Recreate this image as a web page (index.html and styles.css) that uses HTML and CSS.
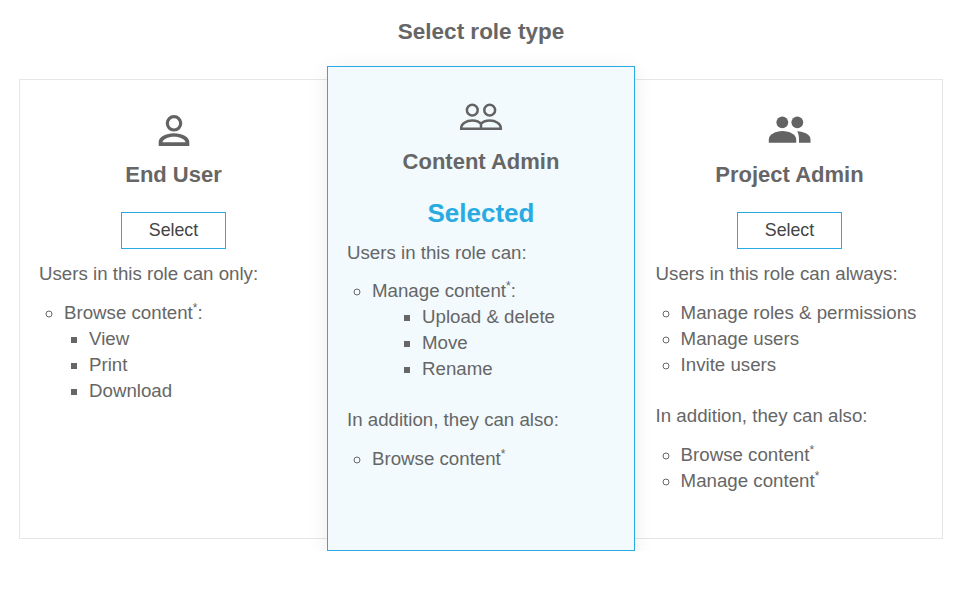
FILE: index.html
```html
<!DOCTYPE html>
<html lang="en">
<head>
<meta charset="utf-8">
<title>Select role type</title>
<link rel="stylesheet" href="styles.css">
</head>
<body>
<main class="page">
  <h1 class="title">Select role type</h1>
  <div class="roles">
    <section class="card card-left">
      <svg class="icon" width="48" height="32" viewBox="0 0 48 32" fill="#636363">
        <circle cx="24" cy="8.300" r="6.700" fill="none" stroke="#636363" stroke-width="3.200"/>
        <path fill-rule="evenodd" d="M8.700 31v-4c0-5 7-8.700 15.300-8.700s15.300 3.700 15.300 8.700v4zM12.400 27.300h23.200c-.6-3-5.400-5.500-11.600-5.500s-11 2.500-11.600 5.500z"/>
      </svg>
      <h2 class="name">End User</h2>
      <button class="select" type="button">Select</button>
      <p class="lead">Users in this role can only:</p>
      <ul class="perms">
        <li>Browse content<sup>*</sup>:
          <ul>
            <li>View</li>
            <li>Print</li>
            <li>Download</li>
          </ul>
        </li>
      </ul>
    </section>
    <section class="card card-active">
      <svg class="icon" width="48" height="32" viewBox="0 0 48 32" fill="none" stroke="#636363" stroke-width="2.500">
        <circle cx="15.300" cy="8.150" r="5.400"/>
        <circle cx="32.700" cy="8.150" r="5.400"/>
        <path d="M4.200 26.800v-1c0-4 5-7.200 11-7.200 3.500 0 7 1 8.800 3.500 1.800-2.500 5.300-3.500 8.800-3.500 6 0 11 3.200 11 7.200v1zM24 22v5"/>
      </svg>
      <h2 class="name">Content Admin</h2>
      <div class="selected">Selected</div>
      <p class="lead">Users in this role can:</p>
      <ul class="perms perms-tight">
        <li>Manage content<sup>*</sup>:
          <ul class="deep">
            <li>Upload &amp; delete</li>
            <li>Move</li>
            <li>Rename</li>
          </ul>
        </li>
      </ul>
      <p class="lead lead-more">In addition, they can also:</p>
      <ul class="perms">
        <li>Browse content<sup>*</sup></li>
      </ul>
    </section>
    <section class="card card-right">
      <svg class="icon" width="48" height="32" viewBox="0 0 48 32" fill="#636363">
        <circle cx="16.300" cy="7.300" r="5.900"/>
        <circle cx="31.300" cy="7.300" r="5.900"/>
        <path d="M2.800 27.700v-3.200c0-5 6.800-8.500 13.700-8.500s13.700 3.500 13.700 8.500v3.200z"/>
        <path d="M31.200 16.200c6.800.3 13.300 3.300 13.300 8v3.500H33v-3.500c0-3-.5-5.800-1.800-8z"/>
      </svg>
      <h2 class="name">Project Admin</h2>
      <button class="select" type="button">Select</button>
      <p class="lead">Users in this role can always:</p>
      <ul class="perms">
        <li>Manage roles &amp; permissions</li>
        <li>Manage users</li>
        <li>Invite users</li>
      </ul>
      <p class="lead lead-more">In addition, they can also:</p>
      <ul class="perms">
        <li>Browse content<sup>*</sup></li>
        <li>Manage content<sup>*</sup></li>
      </ul>
    </section>
  </div>
</main>
</body>
</html>
```
FILE: styles.css
```css
html, body {
  margin: 0;
  padding: 0;
  background: #fff;
}
body {
  font-family: "Liberation Sans", Arial, sans-serif;
  font-size: 18.7px;
  line-height: 26px;
  color: #666;
}
.page {
  width: 924px;
  margin-left: 19px;
}
.title {
  margin: 0;
  padding-top: 18px;
  height: 48px;
  font-size: 22.500px;
  line-height: 28px;
  font-weight: 700;
  text-align: center;
}
.roles {
  display: grid;
  grid-template-columns: repeat(3, 308px);
  height: 485px;
}
.card {
  display: flex;
  flex-direction: column;
  box-sizing: border-box;
  min-width: 0;
  margin: 13px 0 12px;
  padding: 35px 19px 0;
  border: 1px solid #e6e6e6;
}
.card-left {
  border-right: 0;
}
.card-right {
  border-left: 0;
  padding-left: 20.600px;
  padding-right: 18.600px;
}
.card-active {
  position: relative;
  margin: 0;
  background: #f2fafd;
  border: 1px solid #29abe2;
  box-shadow: 0 4px 20px rgba(0, 0, 0, 0.08);
}
.icon {
  display: block;
  align-self: center;
  flex: none;
}
.name {
  margin: 13px 0 0;
  font-size: 22px;
  line-height: 30px;
  font-weight: 700;
  text-align: center;
}
.select {
  align-self: center;
  width: 105px;
  height: 37px;
  margin-top: 22px;
  padding: 0;
  background: #fff;
  border: 1px solid #29abe2;
  border-radius: 0;
  font-family: inherit;
  font-size: 17.800px;
  color: #444;
}
.selected {
  margin: 22px 0 1px;
  font-size: 26px;
  line-height: 28px;
  font-weight: 700;
  color: #29abe2;
  text-align: center;
}
.lead {
  margin: 12px 0 0;
}
.lead-more {
  margin-top: 25px;
}
.perms {
  margin: 13px 0 0;
  padding: 0 0 0 25px;
  list-style: circle;
}
.perms-tight {
  margin-top: 12px;
}
.perms ul {
  margin: 0;
  padding: 0 0 0 25px;
  list-style: square;
}
.perms ul.deep {
  padding-left: 50px;
}
sup {
  font-size: 12px;
  line-height: 0;
}
```
